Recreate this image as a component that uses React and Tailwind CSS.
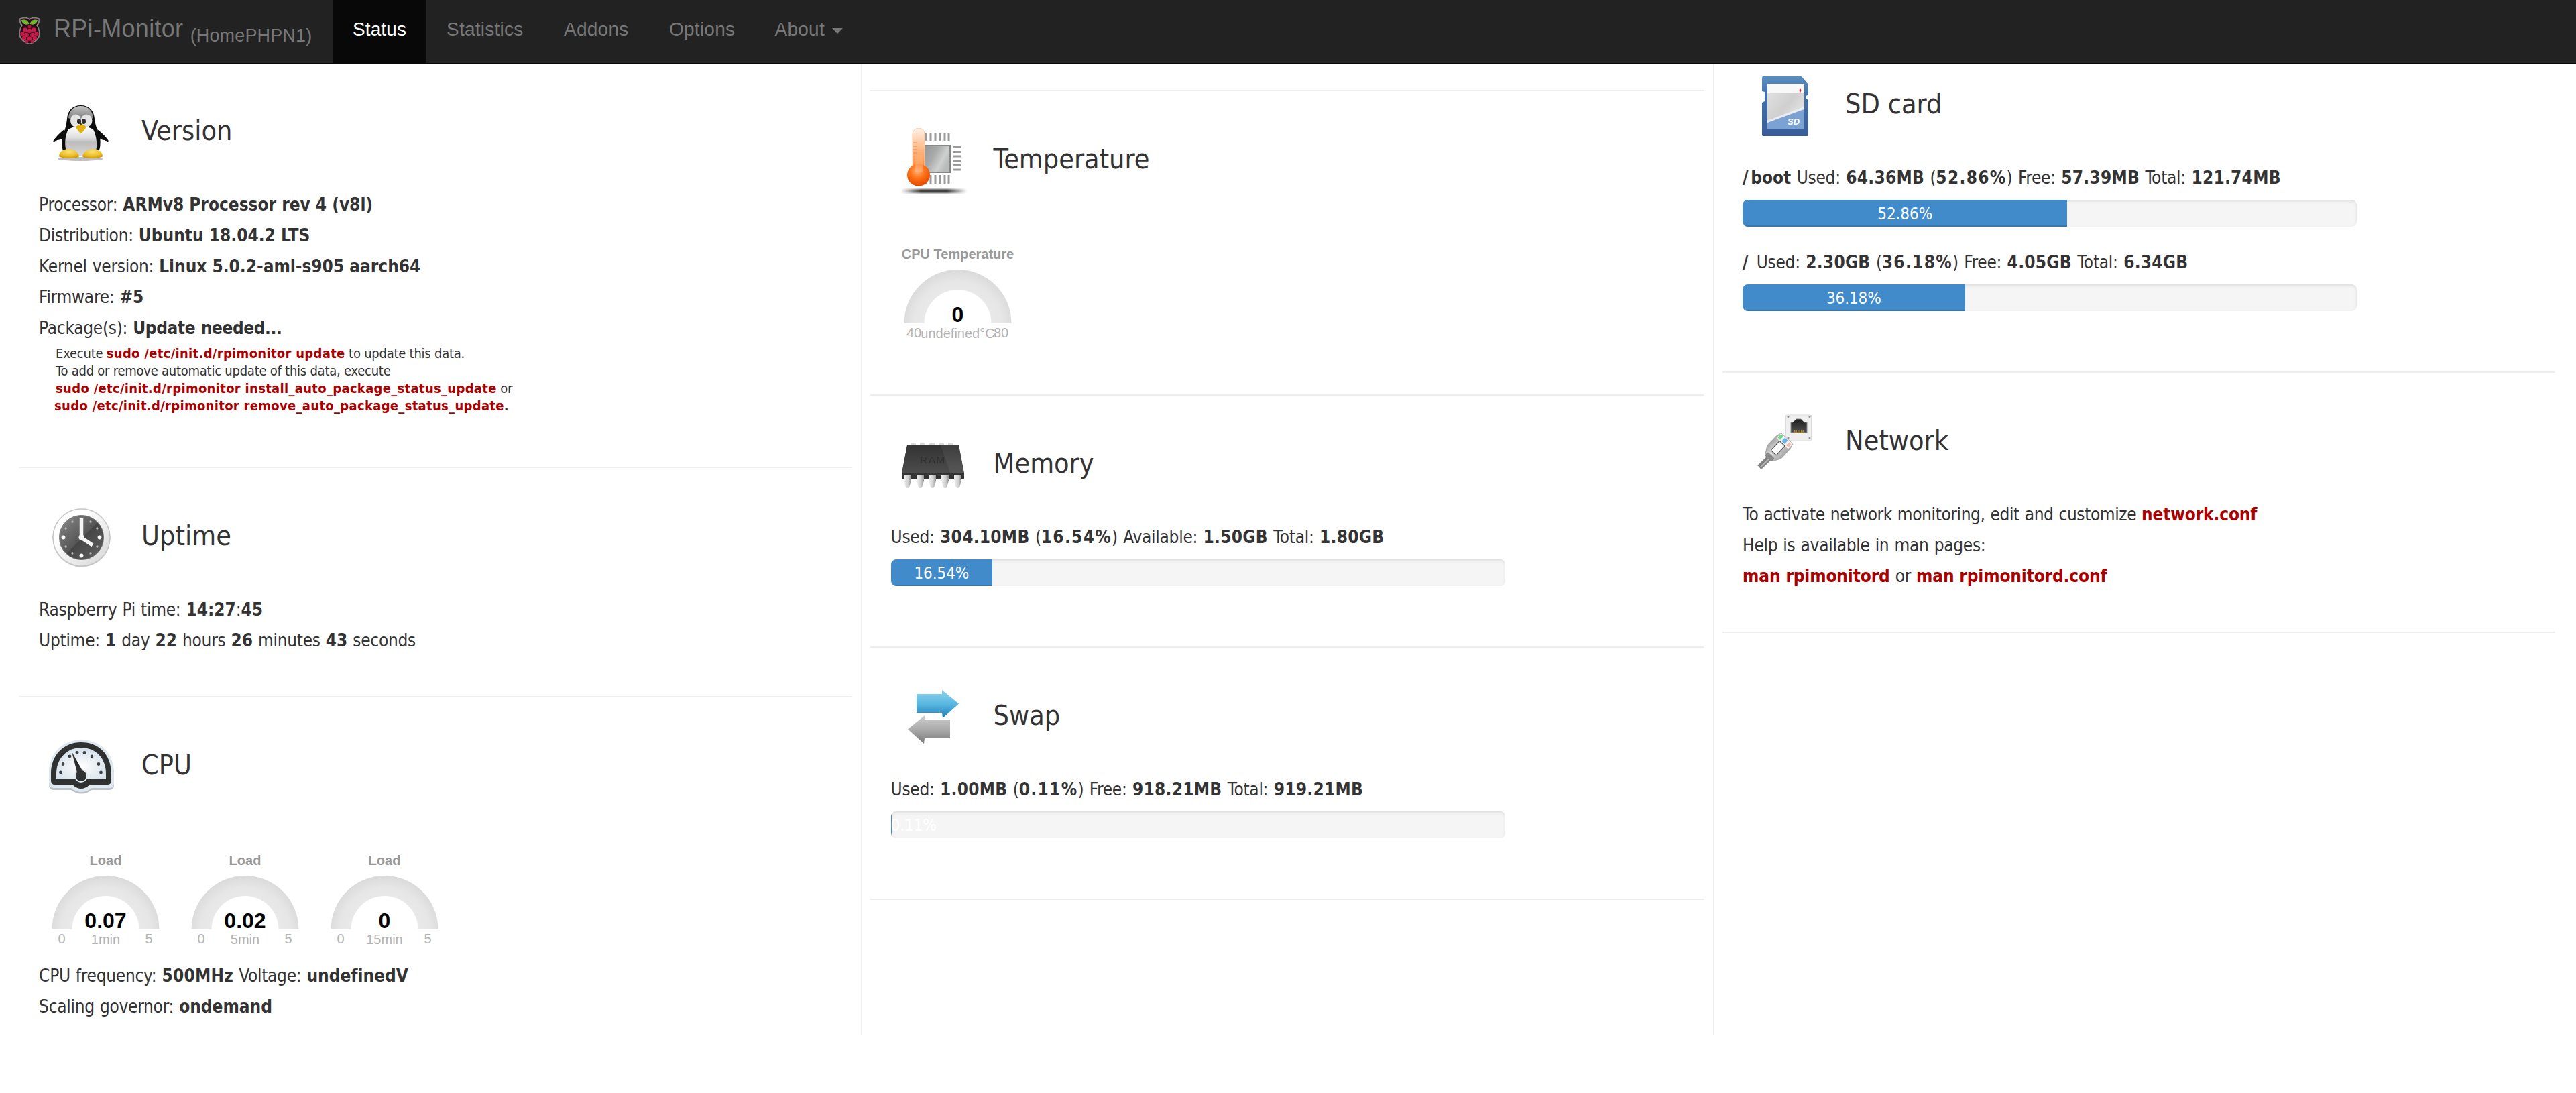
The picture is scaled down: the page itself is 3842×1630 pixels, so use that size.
import React from "react";

const NAV = [
  { label: "Status", width: "w-[140px]", active: true },
  { label: "Statistics", width: "w-[175px]" },
  { label: "Addons", width: "w-[157px]" },
  { label: "Options", width: "w-[158.500px]" },
];

function RaspberryLogo() {
  const drupelets = [
    [16, 20], [9.5, 18.5], [22.5, 18.5], [5.5, 24.5], [26.5, 24.5], [11.5, 26],
    [20.5, 26], [16, 31.5], [8, 31], [24, 31], [12, 36], [20, 36],
  ];
  return (
    <svg className="h-[40px] w-[32px] shrink-0" viewBox="0 0 32 40">
      <path
        d="M2 2C7 0 13 0 16 3C19 0 25 0 30 2C31 6 29 10 27 12C30 16 31 20 31 25C30 32 24 37 16 39.5C8 37 2 32 1 25C1 20 2 16 5 12C3 10 1 6 2 2Z"
        fill="#2a0a14"
        stroke="#7d7d7d"
        strokeWidth="1.8"
      />
      <path d="M4 4C9 2.500 14 4 15.400 10C10 12 5 10 4 4Z" fill="#6fb52c" />
      <path d="M28 4C23 2.500 18 4 16.600 10C22 12 27 10 28 4Z" fill="#6fb52c" />
      <circle cx="16" cy="14" r="2.600" fill="#a8123e" />
      {drupelets.map(([x, y], i) => (
        <circle key={i} cx={x} cy={y} r={i > 9 ? 2.4 : 3.3} fill="#c51a4a" />
      ))}
    </svg>
  );
}

function TuxIcon() {
  return (
    <svg className="size-[100px]" viewBox="0 0 100 100">
      <defs>
        <linearGradient id="tuxHead" x1="0" y1="0" x2="0" y2="1">
          <stop offset="0" stopColor="#c4c4c4" />
          <stop offset="1" stopColor="#777" />
        </linearGradient>
        <linearGradient id="tuxBelly" x1="0" y1="0" x2="0" y2="1">
          <stop offset="0" stopColor="#fff" />
          <stop offset="0.4" stopColor="#dedede" />
          <stop offset="0.55" stopColor="#bcbcbc" />
          <stop offset="1" stopColor="#d8d8d8" />
        </linearGradient>
        <radialGradient id="tuxFoot" cx="0.5" cy="0.3" r="0.8">
          <stop offset="0" stopColor="#fbe27a" />
          <stop offset="0.6" stopColor="#ecbb1f" />
          <stop offset="1" stopColor="#c08a00" />
        </radialGradient>
      </defs>
      <ellipse cx="48" cy="88" rx="34" ry="3" fill="#000" opacity="0.25" />
      <path d="M24 44C16 50 9 58 7 62C8 64 10 63 13 60C14 60 18 60 22 56ZM73 44C81 50 89 58 90 62C89 64 87 63 84 60C83 60 79 60 75 56Z" fill="#0d0d0d" />
      <path d="M48.500 8C36 8 29 16 28 28C27 38 25 44 22 52C19 61 20 76 25 82L72 82C78 76 79 61 76 52C73 44 70 38 69 28C68 16 61 8 48.500 8Z" fill="#0d0d0d" />
      <path d="M48.500 9C37 9 31 17 30 27C38 31 59 31 67 27C66 17 60 9 48.500 9Z" fill="url(#tuxHead)" />
      <path d="M30 44C24 54 24 70 28 80C38 84 60 84 70 80C74 68 72 54 67 44Q48 34 30 44Z" fill="url(#tuxBelly)" />
      <ellipse cx="41" cy="31" rx="8" ry="9.500" fill="#e4e4e4" />
      <ellipse cx="57" cy="31" rx="8.500" ry="9.500" fill="#e4e4e4" />
      <ellipse cx="46" cy="32" rx="3" ry="4" fill="#2a2a2a" />
      <ellipse cx="53" cy="32" rx="3" ry="4" fill="#2a2a2a" />
      <path d="M41 40Q49 33 57 40Q53 47 49 50Q44 47 41 40Z" fill="#e2b010" />
      <path d="M16 84C16 78 22 73 30 73C38 73 45 78 46 84C44 88 20 88 16 84Z" fill="url(#tuxFoot)" />
      <path d="M51 84C52 78 59 73 67 73C75 73 81 78 81 84C77 88 54 88 51 84Z" fill="url(#tuxFoot)" />
    </svg>
  );
}

function ClockIcon() {
  const marks = [30, 60, 120, 150, 210, 240, 300, 330];
  return (
    <svg className="size-[100px]" viewBox="0 0 100 100">
      <defs>
        <linearGradient id="clockRim" x1="0" y1="0" x2="1" y2="1">
          <stop offset="0.3" stopColor="#fff" />
          <stop offset="1" stopColor="#d5d5d5" />
        </linearGradient>
        <linearGradient id="clockFace" x1="0" y1="0" x2="1" y2="1">
          <stop offset="0" stopColor="#8a8a8a" />
          <stop offset="0.5" stopColor="#575757" />
          <stop offset="0.52" stopColor="#464646" />
          <stop offset="1" stopColor="#636363" />
        </linearGradient>
      </defs>
      <circle cx="49.500" cy="49.500" r="43" fill="#999" opacity="0.5" />
      <circle cx="49.500" cy="48.500" r="42.500" fill="url(#clockRim)" stroke="#c6c6c6" strokeWidth="1.500" />
      <circle cx="49.500" cy="48.500" r="33" fill="url(#clockFace)" stroke="#777" />
      {marks.map((a) => (
        <circle key={a} cx="49.500" cy="21.500" r="1.700" fill="#b5b5b5" transform={`rotate(${a} 49.500 48.500)`} />
      ))}
      <circle cx="22.500" cy="48.500" r="2.900" fill="#fff" />
      <circle cx="76.500" cy="48.500" r="2.900" fill="#fff" />
      <circle cx="49.500" cy="75.500" r="2.900" fill="#fff" />
      <path d="M49.500 20V49L66 60" fill="none" stroke="#f5f5f5" strokeWidth="5.500" />
      <circle cx="49.500" cy="48.500" r="4" fill="#f5f5f5" />
    </svg>
  );
}

function MeterIcon() {
  const dots = [[18.5, 57], [22, 44.5], [32, 33], [43, 27.5], [54, 27.5], [65, 33], [75, 44.5], [78.5, 57]];
  return (
    <svg className="size-[100px]" viewBox="0 0 100 100">
      <defs>
        <radialGradient id="meterFace" cx="0.5" cy="0.6" r="0.6">
          <stop offset="0" stopColor="#fff" />
          <stop offset="1" stopColor="#d5e0ea" />
        </radialGradient>
      </defs>
      <path d="M1 60C1 28 22 10 49 10C77 10 98 28 98 60V75Q98 82 91 82H65Q49 93 34 82H8Q1 82 1 75Z" fill="#bcc3ca" transform="translate(0 1)" />
      <path d="M1 59C1 27 22 8.500 49 8.500C77 8.500 98 27 98 59V73Q98 80 91 80H65Q49 92 34 80H8Q1 80 1 73Z" fill="#dfe7ef" />
      <path d="M4 59C4 30 24 12 49 12C75 12 94 30 94 59V69Q94 75 88 75H62Q49 87 36 75H10Q4 75 4 69Z" fill="#303232" />
      <path d="M12 59C12 36 28 20 49 20C71 20 86 36 86 59V67H12Z" fill="url(#meterFace)" />
      {dots.map(([x, y], i) => (
        <circle key={i} cx={x} cy={y} r="2.400" fill="#3d4042" />
      ))}
      <circle cx="49" cy="62" r="10" fill="#dfe7ef" />
      <path d="M35 26L53 58L44 61Z" fill="#303232" />
      <circle cx="49" cy="62" r="8" fill="#303232" />
    </svg>
  );
}

function TemperatureIcon() {
  return (
    <svg className="size-[100px]" viewBox="0 0 100 100">
      <defs>
        <linearGradient id="chipFace" x1="0" y1="0" x2="1" y2="0.5">
          <stop offset="0" stopColor="#8f9292" />
          <stop offset="0.5" stopColor="#a9abab" />
          <stop offset="0.8" stopColor="#cfd0d0" />
          <stop offset="1" stopColor="#b9baba" />
        </linearGradient>
        <linearGradient id="tube" x1="0" y1="0" x2="0" y2="1">
          <stop offset="0" stopColor="#fff3ea" />
          <stop offset="0.4" stopColor="#ffc79d" />
          <stop offset="1" stopColor="#ff8b3a" />
        </linearGradient>
        <radialGradient id="bulb" cx="0.45" cy="0.32" r="0.65">
          <stop offset="0" stopColor="#ffb27c" />
          <stop offset="0.5" stopColor="#ff7318" />
          <stop offset="1" stopColor="#e84a00" />
        </radialGradient>
        <linearGradient id="floor" x1="0" y1="0" x2="1" y2="0">
          <stop offset="0" stopColor="#222" stopOpacity="0" />
          <stop offset="0.3" stopColor="#222" stopOpacity="0.85" />
          <stop offset="0.7" stopColor="#222" stopOpacity="0.85" />
          <stop offset="1" stopColor="#222" stopOpacity="0" />
        </linearGradient>
        <filter id="soft" x="-10%" y="-60%" width="120%" height="220%">
          <feGaussianBlur stdDeviation="1.300" />
        </filter>
      </defs>
      {[37, 44, 51, 58, 65, 71].map((x) => (
        <g key={x} fill="#9b9b9b">
          <rect x={x - 0.5} y="8" width="3" height="12" />
          <rect x={x - 0.5} y="70" width="3" height="13" />
        </g>
      ))}
      {[27, 34, 40.5, 47, 54, 60.5].map((y) => (
        <rect key={y} x="78" y={y} width="13" height="3" fill="#9b9b9b" />
      ))}
      <rect x="30" y="26" width="44" height="40" fill="url(#chipFace)" stroke="#858787" strokeWidth="2" />
      <path d="M18 9A9 9 0 0 1 36 9V58H18Z" fill="url(#tube)" stroke="#ffc8a0" strokeWidth="1" />
      {[22, 27, 32, 37, 42, 47].map((y) => (
        <path key={y} d={`M19 ${y}h6`} stroke="#e9965f" strokeWidth="1.200" />
      ))}
      <ellipse cx="27" cy="70" rx="17" ry="16.500" fill="url(#bulb)" />
      <path d="M22 40H33V66H22Z" fill="#ffb682" opacity="0.5" />
      <rect x="1" y="91" width="98" height="6" fill="url(#floor)" filter="url(#soft)" />
    </svg>
  );
}

function MemoryIcon() {
  return (
    <svg className="size-[100px]" viewBox="0 0 100 100">
      <defs>
        <linearGradient id="ramTop" x1="0" y1="0" x2="0" y2="1">
          <stop offset="0" stopColor="#333" />
          <stop offset="1" stopColor="#4c4c4c" />
        </linearGradient>
        <linearGradient id="ramPin" x1="0" y1="0" x2="1" y2="0">
          <stop offset="0" stopColor="#f1f1f1" />
          <stop offset="0.6" stopColor="#cfcfcf" />
          <stop offset="1" stopColor="#8f8f8f" />
        </linearGradient>
      </defs>
      {[15, 29, 43, 57, 71].map((x) => (
        <rect key={x} x={x} y="15" width="8" height="6" rx="2" fill="#d9d9d9" />
      ))}
      <path d="M10 19H87L95 61V68Q95 70 94 70H3Q2 70 2 68V60Z" fill="#333" />
      <path d="M10 19H87L94.500 60H2.500Z" fill="url(#ramTop)" />
      <path d="M60 19H87L94.500 60H74Z" fill="#fff" opacity="0.06" />
      <text x="29" y="46" fontSize="15" fill="#303030" textLength="37" fontFamily="Liberation Sans, sans-serif">RAM</text>
      {[5, 24, 42, 61, 80].map((x) => (
        <path key={x} d={`M${x} 63h11v9l-3 10q-2.500 2-5 0l-3-10z`} fill="url(#ramPin)" />
      ))}
    </svg>
  );
}

function SwapIcon() {
  return (
    <svg className="size-[100px]" viewBox="0 0 100 100">
      <defs>
        <linearGradient id="arrowBlue" x1="0" y1="0" x2="0" y2="1">
          <stop offset="0" stopColor="#8fd3ee" />
          <stop offset="0.5" stopColor="#58b8e0" />
          <stop offset="1" stopColor="#1f7db8" />
        </linearGradient>
        <linearGradient id="arrowGray" x1="0" y1="0" x2="0" y2="1">
          <stop offset="0" stopColor="#cfcfcf" />
          <stop offset="0.5" stopColor="#aaa" />
          <stop offset="1" stopColor="#7a7a7a" />
        </linearGradient>
      </defs>
      <path d="M24 14H62V8L87 28.500L63 50L62 42H24Z" fill="url(#arrowBlue)" />
      <path d="M74 52H36V46L11 66.500L35 88L36 80H74Z" fill="url(#arrowGray)" />
    </svg>
  );
}

function SdCardIcon() {
  return (
    <svg className="size-[100px]" viewBox="0 0 100 100">
      <defs>
        <linearGradient id="sdBody" x1="0" y1="0" x2="0" y2="1">
          <stop offset="0" stopColor="#5b8fc0" />
          <stop offset="0.3" stopColor="#4272ad" />
          <stop offset="1" stopColor="#3a5c98" />
        </linearGradient>
        <linearGradient id="sdLabel" x1="0" y1="0" x2="1" y2="1">
          <stop offset="0" stopColor="#e4e4e4" />
          <stop offset="0.5" stopColor="#cfcfcf" />
          <stop offset="1" stopColor="#f3f3f3" />
        </linearGradient>
      </defs>
      <path d="M17 5H74L84 17V32L81 34V38L84 40V92Q84 94 82 94H17Q15 94 15 92V44L19 42V28L15 27V7Q15 5 17 5Z" fill="url(#sdBody)" />
      <rect x="23" y="16" width="55" height="67" rx="1.500" fill="url(#sdLabel)" />
      <rect x="23" y="16" width="55" height="14" fill="#f8f8f8" />
      <path d="M23 74L78 54V81.500Q78 83 76.500 83H24.500Q23 83 23 81.500Z" fill="#7aa2d3" />
      <path d="M23 71L78 50V53L23 74Z" fill="#e9eef5" />
      <path d="M72 22L73.500 26L72 29L70.500 26Z" fill="#e02828" />
      <text x="53" y="77" fontSize="13" fontStyle="italic" fontWeight="700" fill="#fff" fontFamily="Liberation Sans, sans-serif">SD</text>
    </svg>
  );
}

function NetworkIcon() {
  return (
    <svg className="size-[100px]" viewBox="0 0 100 100">
      <defs>
        <linearGradient id="plug" x1="0" y1="0" x2="1" y2="0">
          <stop offset="0" stopColor="#a5a5a5" />
          <stop offset="0.4" stopColor="#dadada" />
          <stop offset="1" stopColor="#a9a9a9" />
        </linearGradient>
        <linearGradient id="jack" x1="0" y1="0" x2="0" y2="1">
          <stop offset="0" stopColor="#1c1c1c" />
          <stop offset="1" stopColor="#505050" />
        </linearGradient>
      </defs>
      <rect x="50.500" y="8" width="38" height="38" rx="1" fill="#efefef" stroke="#dcdcdc" />
      <g fill="#8d8d8d">
        <circle cx="54" cy="10.500" r="1.500" />
        <circle cx="86" cy="10.500" r="1.500" />
        <circle cx="86" cy="42" r="1.500" />
        <circle cx="54" cy="42" r="1.500" />
      </g>
      <path d="M58 19H61L66 14H73L78 19H82V34H58Z" fill="url(#jack)" stroke="#888" strokeWidth="1" />
      <path d="M63 33H78" stroke="#a9872a" strokeWidth="4" strokeDasharray="1.500 1" />
      <path d="M11 86L30 68" stroke="#838383" strokeWidth="8" />
      <path d="M13 85L30 69" stroke="#b5b5b5" strokeWidth="2" />
      <g transform="translate(37 59) rotate(43)">
        <path d="M-14 -14L-12 -22H12L14 -14L14 6L8 16H-8L-14 6Z" fill="url(#plug)" stroke="#a5a5a5" strokeWidth="1" />
        <rect x="-7" y="12" width="14" height="7" rx="2" fill="#8a8a8a" />
        <rect x="-12" y="-22" width="24" height="10" fill="#f2f2f2" />
        <rect x="-11" y="-21" width="5" height="7" fill="#74d689" />
        <rect x="-3" y="-21" width="6" height="7" fill="#66b1ec" />
        <rect x="6" y="-20" width="4.500" height="6" fill="#f8b8b0" />
        <rect x="-5.500" y="-12" width="11" height="19" rx="1" fill="#fafafa" stroke="#555" strokeWidth="1.300" />
      </g>
    </svg>
  );
}

function Gauge({ title, value, min, max, label }) {
  return (
    <svg className="h-[204px] w-[208px] font-['Liberation_Sans',Arial,sans-serif]" viewBox="0 0 208 204">
      <defs>
        <radialGradient id="gaugeArc" gradientUnits="userSpaceOnUse" cx="99.500" cy="162" r="84">
          <stop offset="0.6" stopColor="#e9e9e9" />
          <stop offset="0.8" stopColor="#e6e6e6" />
          <stop offset="1" stopColor="#dadada" />
        </radialGradient>
      </defs>
      <path d="M19.500 158A80 80 0 0 1 179.500 158H149.500A50 50 0 0 0 49.500 158Z" fill="url(#gaugeArc)" />
      <g textAnchor="middle">
        <text x="99.500" y="62" fontSize="20" fontWeight="700" fill="#999">{title}</text>
        <text x="99.500" y="156" fontSize="32" fontWeight="700" fill="#010101">{value}</text>
        <text x="99.500" y="179.500" fontSize="20" fill="#b3b3b3">{label}</text>
        <text x="34" y="179" fontSize="20" fill="#b3b3b3">{min}</text>
        <text x="164" y="179" fontSize="20" fill="#b3b3b3">{max}</text>
      </g>
    </svg>
  );
}

function Heading({ icon, title, height = "h-[188px]" }) {
  return (
    <div className={`flex items-end pb-[33px] pl-[14px] ${height}`}>
      {icon}
      <h4 className="mb-[24px] ml-[39px] text-[41px] leading-[60px] font-normal">{title}</h4>
    </div>
  );
}

function Line({ children }) {
  return <p className="h-[46px] text-[26px] leading-[46px] tracking-[-0.28px] whitespace-nowrap [word-spacing:0.9px]">{children}</p>;
}

/* Usage summary: number-heavy line with slightly wider gaps */
function Usage({ path, used, percent, rest, free, total }) {
  return (
    <p className="h-[46px] text-[26px] leading-[46px] tracking-[-0.28px] whitespace-nowrap [word-spacing:1.300px]">
      {path && (
        <>
          <b className="tracking-[3.600px]">/</b>
          <B>{path.slice(1)}</B>{" "}
        </>
      )}
      Used: <Num>{used}</Num> (<b className="tracking-[1.300px]">{percent}</b>) {rest}: <Num>{free}</Num> Total: <Num>{total}</Num>
    </p>
  );
}

function Num({ children }) {
  return <b className="font-bold tracking-[0.25px]">{children}</b>;
}

function B({ children }) {
  return <b className="font-bold tracking-[-0.02px] [word-spacing:0px]">{children}</b>;
}

function Red({ children }) {
  return <b className="font-bold tracking-[-0.16px] text-[#aa0000] [word-spacing:0px]">{children}</b>;
}

function SmallRed({ children }) {
  return <b className="font-bold tracking-[0.31px] text-[#aa0000] [word-spacing:0px]">{children}</b>;
}

function Bar({ percent }) {
  return (
    <div className="mt-[10px] h-[40px] w-[916px] overflow-hidden rounded-[8px] bg-[#f5f5f5] shadow-[inset_0_2px_4px_rgba(0,0,0,0.1)]">
      <div
        className="flex h-full justify-center bg-[#428bca] text-[24px] leading-[43px] tracking-[-0.1px] text-white shadow-[inset_0_-2px_0_rgba(0,0,0,0.15)]"
        style={{ width: `${percent}%` }}
      >
        {percent.toFixed(2)}%
      </div>
    </div>
  );
}

function TinyBar({ percent }) {
  return (
    <div className="mt-[10px] h-[40px] w-[916px] overflow-hidden rounded-[8px] bg-[#f5f5f5] shadow-[inset_0_2px_4px_rgba(0,0,0,0.1)]">
      <div className="h-full bg-[#428bca] text-[24px] leading-[43px] tracking-[-0.1px] text-white" style={{ width: `${percent}%` }}>
        {percent.toFixed(2)}%
      </div>
    </div>
  );
}

function Section({ children, rule = true, bottom = "pb-[60px]" }) {
  return (
    <section className={`pl-[30.500px] ${bottom} ${rule ? "border-b-2 border-[#eee]" : ""}`}>{children}</section>
  );
}

export default function App() {
  return (
    <div className="min-h-[1630px] w-[3842px] overflow-hidden bg-white font-['DejaVu_Sans_Condensed','DejaVu_Sans',Tahoma,sans-serif] text-[#333]">
      <nav className="flex h-[96px] border-b-2 border-[#080808] bg-[#222] font-['Liberation_Sans',Arial,sans-serif] text-[28px] leading-[40px] tracking-[0.25px] text-[#777]">
        <div className="flex w-[496px] pl-[28px]">
          <div className="pt-[26px]">
            <RaspberryLogo />
          </div>
          <div className="ml-[20px] pt-[23px] text-[36px] tracking-[0.3px] whitespace-nowrap">
            RPi-Monitor <span className="align-[-7px] text-[27px] leading-none tracking-[0.15px]">(HomePHPN1)</span>
          </div>
        </div>
        {NAV.map((item) => (
          <a key={item.label} className={`h-[94px] pt-[24px] pl-[30px] ${item.width} ${item.active ? "bg-[#080808] tracking-[0.1px] text-white" : ""}`}>
            {item.label}
          </a>
        ))}
        <a className="flex pt-[24px] pl-[29px]">
          About
          <span className="mt-[18px] ml-[11px] size-0 border-x-8 border-t-8 border-x-transparent border-t-[#777]" />
        </a>
      </nav>

      <main className="ml-[13.600px] flex h-[1448px]">
        <div className="w-[1270.500px] px-[14px]">
          <Section bottom="pb-[78px]">
            <Heading icon={<TuxIcon />} title="Version" height="h-[186px]" />
            <Line>Processor: <B>ARMv8 Processor rev 4 (v8l)</B></Line>
            <Line>Distribution: <B>Ubuntu 18.04.2 LTS</B></Line>
            <Line>Kernel version: <B>Linux 5.0.2-aml-s905 aarch64</B></Line>
            <Line>Firmware: <B>#5</B></Line>
            <Line>Package(s): <b className="tracking-[-0.400px]">Update needed...</b></Line>
            <div className="mt-[2px] pl-[25px] text-[20px] leading-[26px] tracking-[-0.24px] whitespace-nowrap">
              <p>Execute <SmallRed>sudo /etc/init.d/rpimonitor update</SmallRed> to update this data.</p>
              <p>To add or remove automatic update of this data, execute</p>
              <p><SmallRed>sudo /etc/init.d/rpimonitor install_auto_package_status_update</SmallRed> or</p>
              <p className="-ml-[2px]"><SmallRed>sudo /etc/init.d/rpimonitor remove_auto_package_status_update</SmallRed><b>.</b></p>
            </div>
          </Section>
          <Section>
            <Heading icon={<ClockIcon />} title="Uptime" />
            <Line>Raspberry Pi time: <B>14:27</B>:<B>45</B></Line>
            <Line>Uptime: <B>1</B> day <B>22</B> hours <B>26</B> minutes <B>43</B> seconds</Line>
          </Section>
          <Section rule={false} bottom="pb-0">
            <Heading icon={<MeterIcon />} title="CPU" />
            <div className="flex">
              <Gauge title="Load" value="0.07" min="0" max="5" label="1min" />
              <Gauge title="Load" value="0.02" min="0" max="5" label="5min" />
              <Gauge title="Load" value="0" min="0" max="5" label="15min" />
            </div>
            <Line>CPU frequency: <Num>500MHz</Num> Voltage: <B>undefinedV</B></Line>
            <Line>Scaling governor: <B>ondemand</B></Line>
          </Section>
        </div>

        <div className="w-[1270.500px] border-l-2 border-[#eee] pr-[14px] pl-[12px]">
          <div className="h-[40px] border-b-2 border-[#eee]" />
          <Section>
            <Heading icon={<TemperatureIcon />} title="Temperature" />
            <Gauge title="CPU Temperature" value="0" min="40" max="80" label="undefined°C" />
          </Section>
          <Section bottom="pb-[90px]">
            <Heading icon={<MemoryIcon />} title="Memory" />
            <Usage used="304.10MB" percent="16.54%" rest="Available" free="1.50GB" total="1.80GB" />
            <Bar percent={16.54} />
          </Section>
          <Section bottom="pb-[90px]">
            <Heading icon={<SwapIcon />} title="Swap" />
            <Usage used="1.00MB" percent="0.11%" rest="Free" free="918.21MB" total="919.21MB" />
            <TinyBar percent={0.11} />
          </Section>
        </div>

        <div className="w-[1270.500px] border-l-2 border-[#eee] pr-[14px] pl-[12px]">
          <Section bottom="pb-[90px]">
            <Heading icon={<SdCardIcon />} title="SD card" height="h-[146px]" />
            <Usage path="/boot" used="64.36MB" percent="52.86%" rest="Free" free="57.39MB" total="121.74MB" />
            <Bar percent={52.86} />
            <div className="mt-[30px]">
              <Usage path="/" used="2.30GB" percent="36.18%" rest="Free" free="4.05GB" total="6.34GB" />
            </div>
            <Bar percent={36.18} />
          </Section>
          <Section>
            <Heading icon={<NetworkIcon />} title="Network" />
            <p className="h-[46px] text-[26px] leading-[46px] tracking-[-0.400px] whitespace-nowrap [word-spacing:0.9px]">
              To activate network monitoring, edit and customize <Red>network.conf</Red>
            </p>
            <Line>Help is available in man pages:</Line>
            <Line><Red>man rpimonitord</Red> or <Red>man rpimonitord.conf</Red></Line>
          </Section>
        </div>
      </main>
    </div>
  );
}
